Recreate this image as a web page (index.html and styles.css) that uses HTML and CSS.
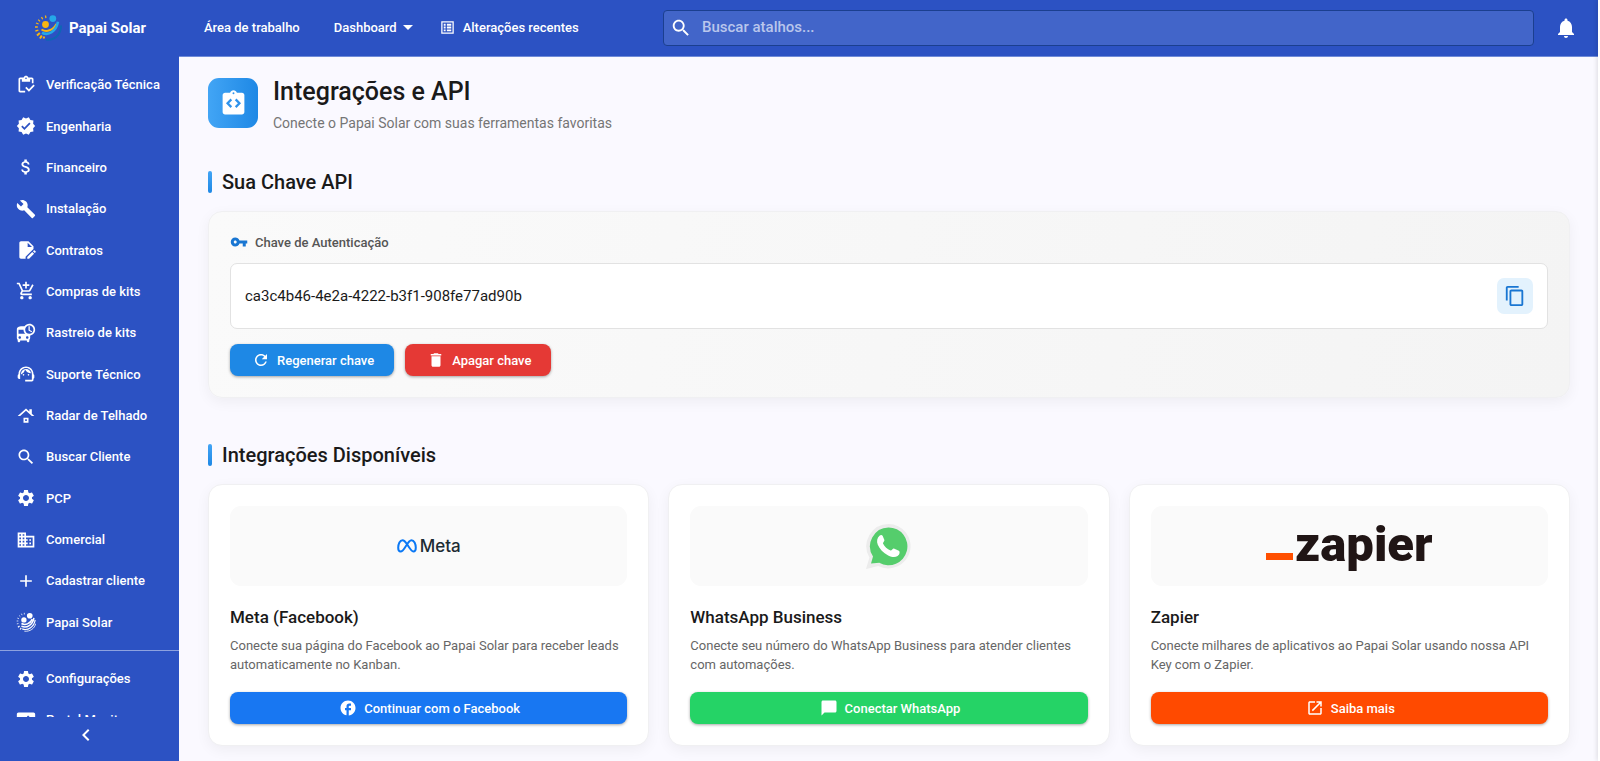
FILE: index.html
```html
<!DOCTYPE html>
<html lang="pt-BR">
<head>
    <meta charset="UTF-8">
    <meta name="viewport" content="width=device-width, initial-scale=1.0">
    <title>Papai Solar - Integrações e API</title>
    <link rel="stylesheet" href="styles.css">
</head>
<body>
    <!-- Ícones usados mais de uma vez -->
    <svg class="sprite" aria-hidden="true">
        <symbol id="i-search" viewBox="0 0 24 24"><path d="M15.5 14h-.79l-.28-.27C15.41 12.59 16 11.11 16 9.5 16 5.91 13.09 3 9.5 3S3 5.91 3 9.5 5.91 16 9.5 16c1.61 0 3.09-.59 4.23-1.57l.27.28v.79l5 4.99L20.49 19l-4.99-5zm-6 0C7.01 14 5 11.99 5 9.5S7.01 5 9.5 5 14 7.01 14 9.5 11.99 14 9.5 14z"/></symbol>
        <symbol id="i-settings" viewBox="0 0 24 24"><path d="M19.14 12.94c.04-.3.06-.61.06-.94 0-.32-.02-.64-.07-.94l2.03-1.58c.18-.14.23-.41.12-.61l-1.92-3.32c-.12-.22-.37-.29-.59-.22l-2.39.96c-.5-.38-1.03-.7-1.62-.94l-.36-2.54c-.04-.24-.24-.41-.48-.41h-3.84c-.24 0-.43.17-.47.41l-.36 2.54c-.59.24-1.13.57-1.62.94l-2.39-.96c-.22-.08-.47 0-.59.22L2.74 8.87c-.12.21-.08.47.12.61l2.03 1.58c-.05.3-.09.63-.09.94s.02.64.07.94l-2.03 1.58c-.18.14-.23.41-.12.61l1.92 3.32c.12.22.37.29.59.22l2.39-.96c.5.38 1.03.7 1.62.94l.36 2.54c.05.24.24.41.48.41h3.84c.24 0 .44-.17.47-.41l.36-2.54c.59-.24 1.13-.56 1.62-.94l2.39.96c.22.08.47 0 .59-.22l1.92-3.32c.12-.22.07-.47-.12-.61l-2.01-1.58zM12 15.6c-1.98 0-3.6-1.62-3.6-3.6s1.62-3.6 3.6-3.6 3.6 1.62 3.6 3.6-1.62 3.6-3.6 3.6z"/></symbol>
    </svg>

    <div class="app">
        <aside class="sidebar">
            <a class="brand" href="#">
                <svg class="brand-logo" viewBox="0 0 28 28">
                    <circle cx="11.5" cy="10.5" r="3.4" fill="#f9b511"/>
                    <circle cx="18.8" cy="4.6" r="3.4" fill="#25a8e8"/>
                    <g fill="none">
                        <path d="M11.5 1.5l.4 2.6M7.5 3l1.2 2.2M4.2 5.6l1.8 1.8M2 9l2.6 1M1 13h2.8M1.4 17l3-.8" stroke="#f9b511" stroke-width="1.3"/>
                        <path d="M3 21.5l2.8-2.4M6 24.5l1.8-3M9.5 24.5l.8-2" stroke="#f9b511" stroke-width="2"/>
                        <path d="M7.5 15.5c5 3 11.5 1 15-5.5" stroke="#f9b511" stroke-width="2"/>
                        <path d="M8 18.8c6.5 3 13.8-.8 16-11" stroke="#25a8e8" stroke-width="2.6"/>
                        <path d="M12 25.5c8 1.5 15-4.5 15-14" stroke="#0e66b5" stroke-width="2"/>
                    </g>
                </svg>
                <span>Papai Solar</span>
            </a>
            <nav class="menu">
                <a href="#"><svg viewBox="0 0 24 24"><path d="M5 5h2v3h10V5h2v5h2V5c0-1.1-.9-2-2-2h-4.18C14.4 1.84 13.3 1 12 1s-2.4.84-2.82 2H5c-1.1 0-2 .9-2 2v14c0 1.1.9 2 2 2h6v-2H5V5zm7-2c.55 0 1 .45 1 1s-.45 1-1 1-1-.45-1-1 .45-1 1-1z"/><path d="M21 11.5L15.51 17l-3.01-3-1.5 1.5 4.51 4.5 6.99-7z"/></svg>Verificação Técnica</a>
                <a href="#"><svg viewBox="0 0 24 24"><path d="M23 12l-2.44-2.79.34-3.69-3.61-.82-1.89-3.2L12 2.96 8.6 1.5 6.71 4.69 3.1 5.5l.34 3.7L1 12l2.44 2.79-.34 3.7 3.61.82L8.6 22.5l3.4-1.47 3.4 1.46 1.89-3.19 3.61-.82-.34-3.69L23 12zm-12.91 4.72l-3.8-3.81 1.48-1.48 2.32 2.33 5.85-5.87 1.48 1.48-7.33 7.35z"/></svg>Engenharia</a>
                <a href="#"><svg viewBox="0 0 24 24"><path d="M11.8 10.9c-2.27-.59-3-1.2-3-2.15 0-1.09 1.01-1.85 2.7-1.85 1.78 0 2.44.85 2.5 2.1h2.21c-.07-1.72-1.12-3.3-3.21-3.81V3h-3v2.16c-1.94.42-3.5 1.68-3.5 3.61 0 2.31 1.91 3.46 4.7 4.13 2.5.6 3 1.48 3 2.41 0 .69-.49 1.79-2.7 1.79-2.06 0-2.87-.92-2.98-2.1h-2.2c.12 2.19 1.76 3.42 3.68 3.83V21h3v-2.15c1.95-.37 3.5-1.5 3.5-3.55 0-2.84-2.43-3.81-4.7-4.4z"/></svg>Financeiro</a>
                <a href="#"><svg viewBox="0 0 24 24"><path d="M22.7 19l-9.1-9.1c.9-2.3.4-5-1.5-6.9-2-2-5-2.4-7.4-1.3L9 6 6 9 1.6 4.7C.4 7.1.9 10.1 2.9 12.1c1.9 1.9 4.6 2.4 6.9 1.5l9.1 9.1c.4.4 1 .4 1.4 0l2.3-2.3c.5-.4.5-1.1.1-1.4z"/></svg>Instalação</a>
                <a href="#"><svg viewBox="0 0 24 24"><path d="M6 1.5h9l6 6v3.2L11.5 20v2.5H6c-1.1 0-2-.9-2-2v-17c0-1.1.9-2 2-2zm8 1.8V8.5h5.2z"/><path d="M13.5 22.5v-2.2l6-6 2.2 2.2-6 6zM20.3 13.5l1-1c.3-.3.8-.3 1.1 0l1.1 1.1c.3.3.3.8 0 1.1l-1 1z"/></svg>Contratos</a>
                <a href="#"><svg viewBox="0 0 24 24"><path d="M11 9h2V6h3V4h-3V1h-2v3H8v2h3v3zm-4 9c-1.1 0-1.99.9-1.99 2S5.9 22 7 22s2-.9 2-2-.9-2-2-2zm10 0c-1.1 0-1.99.9-1.99 2s.89 2 1.99 2 2-.9 2-2-.9-2-2-2zm-9.83-3.25l.03-.12.9-1.63h7.45c.75 0 1.41-.41 1.75-1.03l3.86-7.01L19.42 4h-.01l-1.1 2-2.76 5H8.53l-.13-.27L6.16 6l-.95-2-.94-2H1v2h2l3.6 7.59-1.35 2.45c-.16.28-.25.61-.25.96 0 1.1.9 2 2 2h12v-2H7.42c-.13 0-.25-.11-.25-.25z"/></svg>Compras de kits</a>
                <a href="#"><svg viewBox="0 0 24 24"><path d="M16 1c-2.39 0-4.49 1.2-5.75 3.02C9.84 4.01 9.43 4 9 4c-4.42 0-8 .5-8 4v10c0 .88.39 1.67 1 2.22V22c0 .55.45 1 1 1h1c.55 0 1-.45 1-1v-1h8v1c0 .55.45 1 1 1h1c.55 0 1-.45 1-1v-1.78c.61-.55 1-1.34 1-2.22v-3.08c3.39-.49 6-3.39 6-6.92 0-3.87-3.13-7-7-7zM4.5 19c-.83 0-1.5-.67-1.5-1.5S3.67 16 4.5 16s1.5.67 1.5 1.5S5.33 19 4.5 19zM3 13V8h6c0 1.96.81 3.73 2.11 5H3zm10.5 6c-.83 0-1.5-.67-1.5-1.5s.67-1.5 1.5-1.5 1.5.67 1.5 1.5-.67 1.5-1.5 1.5zm2.5-6c-2.76 0-5-2.24-5-5s2.24-5 5-5 5 2.24 5 5-2.24 5-5 5zm.5-9H15v5l3.62 2.16.75-1.23-2.87-1.68V4z"/></svg>Rastreio de kits</a>
                <a href="#"><svg viewBox="0 0 24 24"><path d="M21 12.22C21 6.73 16.74 3 12 3c-4.69 0-9 3.65-9 9.28-.6.34-1 .98-1 1.72v2c0 1.1.9 2 2 2h1v-6.1c0-3.87 3.13-7 7-7s7 3.13 7 7V19h-8v2h8c1.1 0 2-.9 2-2v-1.22c.59-.31 1-.92 1-1.64v-2.3c0-.7-.41-1.31-1-1.62z"/><circle cx="9" cy="13" r="1"/><circle cx="15" cy="13" r="1"/><path d="M18 11.03C17.52 8.18 15.04 6 12.05 6c-3.03 0-6.29 2.51-6.03 6.45 2.47-1.01 4.33-3.21 4.86-5.89 1.31 2.63 4 4.44 7.12 4.47z"/></svg>Suporte Técnico</a>
                <a href="#"><svg viewBox="0 0 24 24"><path d="M13 18h-2v-2h2v2zm2-4H9v6h6v-6zm4-4.7V4h-3v2.6L12 3 2 12h3l7-6.31L19 12h3l-3-2.7z"/></svg>Radar de Telhado</a>
                <a href="#"><svg><use href="#i-search"/></svg>Buscar Cliente</a>
                <a href="#"><svg><use href="#i-settings"/></svg>PCP</a>
                <a href="#"><svg viewBox="0 0 24 24"><path d="M12 7V3H2v18h20V7H12zM6 19H4v-2h2v2zm0-4H4v-2h2v2zm0-4H4V9h2v2zm0-4H4V5h2v2zm4 12H8v-2h2v2zm0-4H8v-2h2v2zm0-4H8V9h2v2zm0-4H8V5h2v2zm10 12h-8v-2h2v-2h-2v-2h2v-2h-2V9h8v10zm-2-8h-2v2h2v-2zm0 4h-2v2h2v-2z"/></svg>Comercial</a>
                <a href="#"><svg viewBox="0 0 24 24"><path d="M19 13h-6v6h-2v-6H5v-2h6V5h2v6h6v2z"/></svg>Cadastrar cliente</a>
                <a href="#">
                    <svg viewBox="0 0 24 24">
                        <circle cx="9.5" cy="9.5" r="3.2"/><circle cx="16.5" cy="4.5" r="3.4"/>
                        <g fill="none" stroke="#fff">
                            <path d="M10 1v2M6.5 2l.8 1.8M3.8 4.2l1.4 1.4M1.6 7.3l2 .8M.8 10.8h2M1 14.3l2-.5" stroke-width=".9"/>
                            <path d="M2.3 18.3l2-1.5M5 21l1.3-2" stroke-width="1.4"/>
                            <path d="M6.5 13.8c4.5 2.5 10.5.5 13-5.3M6.5 17c6.5 3 13.5-1.5 15-10" stroke-width="1.8"/>
                            <path d="M7.5 20.3C14.5 22.8 22 17.5 23 9.500" stroke-width="1.4"/>
                            <path d="M10 23c7 .8 12.5-3.5 13.6-9" stroke-width="1"/>
                        </g>
                    </svg>Papai Solar
                </a>
            </nav>
            <nav class="menu-secondary">
                <a href="#"><svg><use href="#i-settings"/></svg>Configurações</a>
                <a href="#"><svg viewBox="0 0 24 24"><path d="M3 3h18c1.1 0 2 .9 2 2v14c0 1.1-.9 2-2 2H3c-1.1 0-2-.9-2-2V5c0-1.1.9-2 2-2zm11.5 3.5L13 8l5 5 1.5-1.5z"/></svg>Portal Monitor</a>
            </nav>
            <button class="collapse" type="button" aria-label="Recolher menu">
                <svg viewBox="0 0 24 24"><path d="M15.41 7.41L14 6l-6 6 6 6 1.41-1.41L10.83 12z"/></svg>
            </button>
        </aside>

        <div class="page">
            <header class="topbar">
                <nav class="topnav">
                    <a href="#">Área de trabalho</a>
                    <a class="has-menu" href="#">Dashboard<svg viewBox="0 0 10 5"><path d="M0 0h10L5 5z"/></svg></a>
                    <a class="recent" href="#"><svg viewBox="0 0 24 24"><path d="M2 2h20v20H2zm2 2v16h16V4zm2 2h3v3H6zm5 0h7v3h-7zM6 10.500h3v3H6zm5 0h7v3h-7zM6 15h3v3H6zm5 0h7v3h-7z" fill-rule="evenodd"/></svg>Alterações recentes</a>
                </nav>
                <label class="search">
                    <svg><use href="#i-search"/></svg>
                    <input type="text" placeholder="Buscar atalhos..." aria-label="Buscar atalhos">
                </label>
                <button class="bell" type="button" aria-label="Notificações">
                    <svg viewBox="0 0 24 24"><path d="M12 22c1.1 0 2-.9 2-2h-4c0 1.100.89 2 2 2zm6-6v-5c0-3.070-1.640-5.640-4.500-6.320V4c0-.83-.67-1.5-1.5-1.5s-1.5.67-1.5 1.5v.68C7.630 5.360 6 7.920 6 11v5l-2 2v1h16v-1l-2-2z"/></svg>
                </button>
            </header>

            <main class="content">
                <div class="page-title">
                    <div class="page-icon">
                        <svg viewBox="0 0 24 24"><path d="M19 3h-4.18C14.4 1.84 13.3 1 12 1s-2.4.84-2.82 2H5c-1.1 0-2 .9-2 2v14c0 1.1.9 2 2 2h14c1.1 0 2-.9 2-2V5c0-1.1-.9-2-2-2z" fill="#fff"/><circle cx="12" cy="3.5" r=".8" fill="#2f93ec"/><path d="M10.200 8.600L7.100 11.800l3.100 3.200M13.800 8.600l3.100 3.200-3.100 3.200" fill="none" stroke="#2f93ec" stroke-width="1.9"/></svg>
                    </div>
                    <div>
                        <h1>Integrações e API</h1>
                        <p>Conecte o Papai Solar com suas ferramentas favoritas</p>
                    </div>
                </div>

                <h2>Sua Chave API</h2>
                <section class="card key-card">
                    <label class="key-label" for="api-key">
                        <svg viewBox="0 0 24 24"><path d="M12.65 10C11.83 7.67 9.61 6 7 6c-3.31 0-6 2.69-6 6s2.69 6 6 6c2.61 0 4.83-1.67 5.65-4H17v4h4v-4h2v-4H12.65zM7 14c-1.1 0-2-.9-2-2s.9-2 2-2 2 .9 2 2-.9 2-2 2z"/></svg>
                        Chave de Autenticação
                    </label>
                    <div class="key-box">
                        <input type="text" id="api-key" value="ca3c4b46-4e2a-4222-b3f1-908fe77ad90b" readonly>
                        <button class="copy" type="button" aria-label="Copiar chave">
                            <svg viewBox="0 0 24 24"><path d="M16 1H4c-1.1 0-2 .9-2 2v14h2V3h12V1zm3 4H8c-1.1 0-2 .9-2 2v14c0 1.1.9 2 2 2h11c1.1 0 2-.9 2-2V7c0-1.1-.9-2-2-2zm0 16H8V7h11v14z"/></svg>
                        </button>
                    </div>
                    <div class="key-actions">
                        <button class="btn btn-blue" type="button"><svg viewBox="0 0 24 24"><path d="M17.65 6.35C16.2 4.9 14.21 4 12 4c-4.42 0-7.99 3.58-7.99 8s3.57 8 7.99 8c3.73 0 6.84-2.55 7.73-6h-2.08c-.82 2.33-3.04 4-5.65 4-3.31 0-6-2.69-6-6s2.69-6 6-6c1.66 0 3.14.69 4.22 1.78L13 11h7V4l-2.35 2.35z"/></svg>Regenerar chave</button>
                        <button class="btn btn-red" type="button"><svg viewBox="0 0 24 24"><path d="M6 19c0 1.1.9 2 2 2h8c1.1 0 2-.9 2-2V7H6v12zM19 4h-3.5l-1-1h-5l-1 1H5v2h14V4z"/></svg>Apagar chave</button>
                    </div>
                </section>

                <h2>Integrações Disponíveis</h2>
                <div class="integrations">
                    <article class="card">
                        <div class="logo-box logo-meta">
                            <svg viewBox="0 0 20 14"><path d="M10 5.2C8.300 2.500 7 1.200 5.500 1.200 3 1.200 1.200 4.800 1.200 8.800c0 2.400.9 3.800 2.400 3.800 1.800 0 3.200-2.100 5.200-5.400 2.300-3.900 3.700-6 5.700-6 2.500 0 4.300 3.600 4.300 7.600 0 2.400-.9 3.800-2.400 3.800-1.900 0-3.300-2.400-6.400-7.400z" fill="none" stroke="#0a78f5" stroke-width="2"/></svg>
                            <span>Meta</span>
                        </div>
                        <h3>Meta (Facebook)</h3>
                        <p>Conecte sua página do Facebook ao Papai Solar para receber leads automaticamente no Kanban.</p>
                        <button class="btn btn-facebook" type="button"><svg viewBox="0 0 24 24"><path d="M22 12c0-5.520-4.480-10-10-10S2 6.480 2 12c0 4.840 3.440 8.870 8 9.800V15H8v-3h2V9.500C10 7.570 11.570 6 13.500 6H16v3h-2c-.55 0-1 .45-1 1v2h3v3h-3v6.950c5.050-.5 9-4.760 9-9.950z"/></svg>Continuar com o Facebook</button>
                    </article>
                    <article class="card">
                        <div class="logo-box">
                            <svg class="logo-whatsapp" viewBox="0 0 45 45">
                                <path d="M22.500 0a22.200 22.200 0 1 1-10.200 42L0 45l3.400-11.600A22.200 22.200 0 0 1 22.500 0z" fill="#ececec"/>
                                <path d="M22.500 3.400a18.900 18.900 0 1 1-9.200 35.400L5 39.500l2-7A18.900 18.900 0 0 1 22.500 3.400z" fill="#55cd6c"/>
                                <path d="M13.500 11.800c1.200-1.100 2.600-1 3.200.3l1.700 3.900c.4 1-1.700 2.600-1.400 3.400 1.600 3.300 4.200 5.600 7.600 7.100 1 .3 2.400-2.300 3.300-1.900l4.900 2.200c1.300.7 1.100 3.800-1.200 5.200-2.600 1.500-5.400 1.300-9.400-.6-5-2.400-8.700-6.600-10.400-10.600-1.400-3.500-.7-6.900 1.700-9z" fill="#fff"/>
                            </svg>
                        </div>
                        <h3>WhatsApp Business</h3>
                        <p>Conecte seu número do WhatsApp Business para atender clientes com automações.</p>
                        <button class="btn btn-whatsapp" type="button"><svg viewBox="0 0 24 24"><path d="M20 2H4c-1.1 0-2 .9-2 2v18l4-4h14c1.1 0 2-.9 2-2V4c0-1.1-.9-2-2-2z"/></svg>Conectar WhatsApp</button>
                    </article>
                    <article class="card">
                        <div class="logo-box logo-zapier"><span>zapier</span></div>
                        <h3>Zapier</h3>
                        <p>Conecte milhares de aplicativos ao Papai Solar usando nossa API Key com o Zapier.</p>
                        <button class="btn btn-zapier" type="button"><svg viewBox="0 0 24 24"><path d="M19 19H5V5h7V3H5c-1.110 0-2 .9-2 2v14c0 1.100.89 2 2 2h14c1.100 0 2-.9 2-2v-7h-2v7zM14 3v2h3.590l-9.830 9.830 1.410 1.410L19 6.410V10h2V3h-7z"/></svg>Saiba mais</button>
                    </article>
                </div>
            </main>
        </div>
    </div>
</body>
</html>
```

FILE: styles.css
```css
* {
    box-sizing: border-box;
}
body {
    margin: 0;
    font-family: Roboto, "Noto Sans", sans-serif;
    font-size: 13px;
    color: #1a1a1a;
    background-color: #fff;
}
a {
    color: inherit;
    text-decoration: none;
}
button, input {
    font-family: inherit;
    color: inherit;
}
button {
    padding: 0;
    border: none;
    cursor: pointer;
}
svg {
    flex: none;
    fill: currentColor;
}
h1, h2, h3, p {
    margin: 0;
    font-weight: 500;
}
.sprite {
    display: none;
}
.app {
    display: flex;
    height: 100vh;
    margin-right: 2px;
}
/* Sombra da gaveta fechada na borda direita */
.app::after {
    content: "";
    position: fixed;
    top: 0;
    right: 0;
    bottom: 0;
    width: 2px;
    background-color: #fff;
    box-shadow: 0 0 5px rgba(0, 0, 0, 0.25);
}

/* Menu lateral */
.sidebar {
    flex: none;
    display: flex;
    flex-direction: column;
    width: 179px;
    background-color: #2c52c3;
    color: #fff;
    font-weight: 500;
}
.brand {
    flex: none;
    display: flex;
    align-items: center;
    gap: 7px;
    height: 56px;
    margin-bottom: 8px;
    padding-left: 34px;
    font-size: 15px;
    font-weight: 700;
}
.brand-logo {
    width: 28px;
    height: 28px;
}
.menu {
    flex: 1;
    display: flex;
    flex-direction: column;
    padding-bottom: 7px;
}
.menu a {
    flex: 1;
}
.menu a, .menu-secondary a {
    display: flex;
    align-items: center;
    gap: 10px;
    padding-left: 16px;
    white-space: nowrap;
}
.menu svg, .menu-secondary svg {
    width: 20px;
    height: 20px;
}
.menu-secondary {
    flex: none;
    height: 67px;
    padding-top: 7px;
    border-top: 1px solid #8da2df;
    overflow: hidden;
}
.menu-secondary a {
    height: 41px;
}
.collapse {
    flex: none;
    height: 44px;
    padding: 0 8px 8px 0;
    background: none;
}
.collapse svg {
    display: block;
    width: 24px;
    height: 24px;
    margin: 0 auto;
}

/* Barra superior */
.page {
    flex: 1;
    min-width: 0;
    display: flex;
    flex-direction: column;
    background-color: #faf9ff;
}
.topbar {
    flex: none;
    display: flex;
    align-items: center;
    height: 57px;
    padding: 0 20px 0 25px;
    background-color: #2c52c3;
    border-bottom: 1px solid #6f8bd8;
    color: #fff;
}
.topnav {
    flex: none;
    display: flex;
    gap: 27px;
    width: 459px;
    padding-bottom: 1px;
    font-weight: 500;
}
.topnav a {
    display: flex;
    align-items: center;
    white-space: nowrap;
}
.has-menu {
    gap: 6px;
    margin-left: 7px;
}
.has-menu svg {
    width: 10px;
    height: 5px;
}
.recent {
    gap: 8px;
}
.recent svg {
    width: 15px;
    height: 15px;
}
.search {
    flex: 1;
    display: flex;
    align-items: center;
    gap: 10px;
    height: 36px;
    padding: 0 6px;
    border: 1px solid #1b3f8f;
    border-radius: 4px;
    background-color: #4265c9;
}
.search svg {
    width: 22px;
    height: 22px;
}
.search input {
    flex: 1;
    padding: 0 0 2px;
    border: none;
    outline: none;
    background: none;
    font-size: 15px;
    font-weight: 500;
}
.search input::placeholder {
    color: #b9c6ec;
    opacity: 1;
}
.bell {
    margin-left: 20px;
    background: none;
}
.bell svg {
    display: block;
    width: 24px;
    height: 24px;
}

/* Conteúdo */
.content {
    flex: 1;
    overflow: hidden;
    padding: 21px 28px 21px 29px;
}
.page-title {
    display: flex;
    gap: 15px;
    margin-bottom: 38px;
}
.page-icon {
    display: flex;
    align-items: center;
    justify-content: center;
    width: 50px;
    height: 50px;
    border-radius: 11px;
    background: linear-gradient(90deg, #42a5f5, #1e88e5);
}
.page-icon svg {
    width: 29px;
    height: 29px;
}
h1 {
    font-size: 25px;
    line-height: 28px;
}
.page-title p {
    margin-top: 7px;
    font-size: 14px;
    line-height: 20px;
    font-weight: 400;
    color: #757575;
}
h2 {
    display: flex;
    align-items: center;
    gap: 10px;
    margin-bottom: 18px;
    font-size: 20px;
    line-height: 22px;
}
h2::before {
    content: "";
    width: 4px;
    height: 22px;
    border-radius: 2px;
    background: linear-gradient(#42a5f5, #1e88e5);
}
.card {
    padding: 21px;
    border: 1px solid #f0f0f2;
    border-radius: 14px;
    background-color: #fff;
    box-shadow: 0 4px 14px rgba(0, 0, 0, 0.05);
}
.key-card {
    margin-bottom: 46px;
    background: linear-gradient(100deg, #fafafa, #f4f4f4);
}
.key-label {
    display: flex;
    align-items: center;
    gap: 7px;
    height: 18px;
    margin-bottom: 12px;
    font-weight: 500;
    color: #555;
}
.key-label svg {
    width: 18px;
    height: 18px;
    color: #1976d2;
}
.key-box {
    display: flex;
    align-items: center;
    height: 66px;
    margin-bottom: 15px;
    padding: 0 14px;
    border: 1px solid #e2e2e2;
    border-radius: 7px;
    background-color: #fff;
}
.key-box input {
    flex: 1;
    padding: 0;
    border: none;
    outline: none;
    background: none;
    font-size: 15px;
}
.copy {
    width: 36px;
    height: 36px;
    border-radius: 7px;
    background-color: #e3f2fd;
    color: #1976d2;
}
.copy svg {
    display: block;
    width: 22px;
    height: 22px;
    margin: 0 auto;
}
.key-actions {
    display: flex;
    gap: 11px;
}
.btn {
    display: flex;
    align-items: center;
    justify-content: center;
    gap: 7px;
    height: 32px;
    padding: 0 20px 0 22px;
    border-radius: 8px;
    box-shadow: 0 1px 3px rgba(0, 0, 0, 0.35);
    font-size: 13px;
    font-weight: 500;
    color: #fff;
}
.btn svg {
    width: 18px;
    height: 18px;
}
.btn-blue {
    background-color: #1e88e5;
}
.btn-red {
    background-color: #e53935;
}

/* Integrações */
.integrations {
    display: grid;
    grid-template-columns: repeat(3, 1fr);
    gap: 19px;
}
.logo-box {
    display: flex;
    align-items: center;
    justify-content: center;
    height: 80px;
    margin-bottom: 20px;
    border-radius: 11px;
    background-color: #fafafa;
}
.logo-meta {
    gap: 3px;
    font-size: 17px;
    font-family: Inter, sans-serif;
    font-weight: 500;
    color: #1c2b33;
}
.logo-meta svg {
    width: 20px;
    height: 14px;
}
.logo-whatsapp {
    width: 45px;
    height: 45px;
}
.logo-zapier {
    gap: 2px;
    font-size: 49px;
    line-height: 60px;
    font-weight: 900;
    color: #201515;
}
.logo-zapier span {
    padding-bottom: 2px;
}
.logo-zapier::before {
    content: "";
    width: 27px;
    height: 7px;
    margin-top: 21px;
    background-color: #ff4f00;
}
h3 {
    margin-bottom: 8px;
    font-size: 17px;
    line-height: 22px;
}
.integrations p {
    margin-bottom: 18px;
    font-weight: 400;
    line-height: 19px;
    color: #666;
}
.integrations .btn {
    width: 100%;
}
.btn-facebook {
    background-color: #1877f2;
}
.btn-whatsapp {
    background-color: #25d366;
}
.btn-zapier {
    background-color: #ff4a00;
}
```
